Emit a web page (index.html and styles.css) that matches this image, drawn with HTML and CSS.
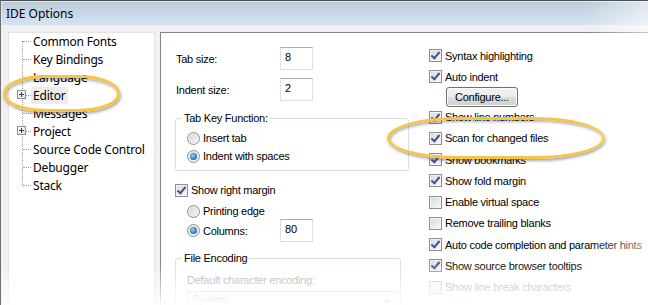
FILE: index.html
```html
<!DOCTYPE html>
<html lang="en">
<head>
    <meta charset="UTF-8">
    <title>IDE Options</title>
    <link rel="stylesheet" href="styles.css">
</head>
<body>
    <div class="window">
        <div class="titlebar">IDE Options</div>
        <div class="client">
            <!-- category tree -->
            <ul class="tree">
                <li class="node"><span class="gutter"></span><span class="label">Common Fonts</span></li>
                <li class="node"><span class="gutter"></span><span class="label">Key Bindings</span></li>
                <li class="node"><span class="gutter"></span><span class="label">Language</span></li>
                <li class="node"><span class="gutter"><span class="expander"></span></span><span class="label selected">Editor</span></li>
                <li class="node"><span class="gutter"></span><span class="label">Messages</span></li>
                <li class="node"><span class="gutter"><span class="expander"></span></span><span class="label">Project</span></li>
                <li class="node"><span class="gutter"></span><span class="label">Source Code Control</span></li>
                <li class="node"><span class="gutter"></span><span class="label">Debugger</span></li>
                <li class="node"><span class="gutter"></span><span class="label">Stack</span></li>
            </ul>

            <div class="pane">
                <div class="col-left">
                    <div class="field-row">
                        <span class="field-label">Tab size:</span>
                        <span class="textbox">8</span>
                    </div>
                    <div class="field-row second">
                        <span class="field-label">Indent size:</span>
                        <span class="textbox">2</span>
                    </div>

                    <fieldset class="group tab-key">
                        <legend>Tab Key Function:</legend>
                        <div class="opt-row first"><span class="radio"></span>Insert tab</div>
                        <div class="opt-row"><span class="radio on"></span>Indent with spaces</div>
                    </fieldset>

                    <div class="opt-row margin-check"><span class="check on"></span>Show right margin</div>
                    <div class="opt-row sub printing"><span class="radio"></span>Printing edge</div>
                    <div class="field-row columns">
                        <span class="field-label sub"><span class="radio on"></span>Columns:</span>
                        <span class="textbox">80</span>
                    </div>

                    <fieldset class="group encoding">
                        <legend>File Encoding</legend>
                        <div class="opt-row first disabled">Default character encoding:</div>
                        <div class="select">System<span class="arrow"></span></div>
                    </fieldset>
                </div>

                <div class="col-right">
                    <div class="opt-row tall"><span class="check on"></span>Syntax highlighting</div>
                    <div class="opt-row tall"><span class="check on"></span>Auto indent</div>
                    <button class="btn">Configure...</button>
                    <div class="opt-row tall"><span class="check on"></span>Show line numbers</div>
                    <div class="opt-row tall"><span class="check on"></span>Scan for changed files</div>
                    <div class="opt-row tall"><span class="check on"></span>Show bookmarks</div>
                    <div class="opt-row tall"><span class="check on"></span>Show fold margin</div>
                    <div class="opt-row tall"><span class="check"></span>Enable virtual space</div>
                    <div class="opt-row tall"><span class="check"></span>Remove trailing blanks</div>
                    <div class="opt-row tall"><span class="check on"></span>Auto code completion and parameter hints</div>
                    <div class="opt-row tall"><span class="check on"></span>Show source browser tooltips</div>
                    <div class="opt-row tall disabled"><span class="check"></span>Show line break characters</div>
                </div>
            </div>
        </div>

        <!-- highlight marks drawn over the dialog -->
        <div class="callout callout-editor"></div>
        <div class="callout callout-scan"></div>
        <div class="fade"></div>
    </div>
</body>
</html>
```

FILE: styles.css
```css
body {
    margin: 0;
    padding: 0;
    background: #fff;
}
.window {
    position: relative;
    width: 647px;
    height: 304px;
    overflow: hidden;
    background: #f0f0f0;
    border-top: 1px solid #4f4f4f;
    border-left: 1px solid #6f6f6f;
    font-family: "Liberation Sans", Arial, sans-serif;
    font-size: 11px;
    letter-spacing: -0.25px;
    color: #000;
}
.titlebar {
    height: 24px;
    line-height: 25px;
    padding-left: 5px;
    font-family: "Noto Sans", sans-serif;
    font-size: 12px;
    letter-spacing: 0;
    background: linear-gradient(to bottom, #b9cad9, #c9d8e7 50%, #d5e3f1);
    box-shadow: inset 1px 1px 0 #e2e9f1;
}
.client {
    display: flex;
    height: 273px;
    padding: 7px 0 0 7px;
}

/* tree */
.tree {
    position: relative;
    list-style: none;
    margin: 0;
    padding: 0;
    width: 145px;
    background: #fff;
    border: 1px solid #e4e4e4;
    border-bottom: none;
    font-family: "Noto Sans", sans-serif;
    font-size: 12px;
    letter-spacing: -0.2px;
}
.tree::before {
    content: "";
    position: absolute;
    left: 13px;
    top: 8px;
    height: 144px;
    border-left: 1px dotted #a0a0a0;
}
.node {
    display: flex;
    align-items: center;
    height: 18px;
}
.tree .node:first-child {
    margin-top: -1px;
}
.gutter {
    position: relative;
    width: 22px;
    height: 18px;
    flex: none;
}
.gutter::after {
    content: "";
    position: absolute;
    left: 14px;
    right: 0;
    top: 9px;
    border-top: 1px dotted #a0a0a0;
}
.expander {
    position: absolute;
    z-index: 1;
    left: 8px;
    top: 4px;
    width: 7px;
    height: 7px;
    border: 1px solid #919191;
    background: linear-gradient(135deg, #fff, #dcdcdc);
}
.expander::before,
.expander::after {
    content: "";
    position: absolute;
    background: #1f3f7a;
}
.expander::before {
    left: 1px;
    top: 3px;
    width: 5px;
    height: 1px;
}
.expander::after {
    left: 3px;
    top: 1px;
    width: 1px;
    height: 5px;
}
.label {
    padding: 0 2px;
    line-height: 17px;
}
.label.selected {
    background: #ececec;
}

/* options pane */
.pane {
    flex: 1;
    display: flex;
    margin: 0 -10px 0 5px;
    background: #fff;
    border: 1px solid #82858d;
    border-bottom: none;
}
.col-left {
    width: 244px;
    padding: 14px 0 0 14px;
    flex: none;
}
.col-right {
    flex: 1;
    padding: 12px 0 0 10px;
}
.field-row {
    display: flex;
    align-items: center;
    height: 23px;
}
.field-row.second {
    margin-top: 8px;
}
.field-label {
    width: 104px;
    padding-left: 1px;
    display: flex;
    align-items: center;
}
.field-label.sub {
    width: 93px;
    padding-left: 12px;
}
.textbox {
    box-sizing: border-box;
    width: 33px;
    height: 23px;
    padding: 3px 0 0 4px;
    border: 1px solid #dbdfe6;
    border-top-color: #abadb3;
    letter-spacing: 0;
}

.group {
    box-sizing: border-box;
    margin: 0;
    padding: 0 0 5px 6px;
    border: 1px solid #d5dfe5;
    border-radius: 3px;
}
.group legend {
    padding: 0 2px;
    line-height: 14px;
}
.tab-key {
    width: 234px;
    margin-top: 10px;
}
.encoding {
    width: 226px;
    margin-top: 9px;
    padding-bottom: 0;
    height: 60px;
}

.opt-row {
    display: flex;
    align-items: center;
    height: 18px;
    white-space: nowrap;
}
.group .opt-row {
    margin-left: 5px;
}
.group .opt-row.first {
    margin-top: 4px;
}
.encoding .opt-row.first {
    margin-top: 6px;
}
.opt-row.tall {
    height: 21.25px;
}
.margin-check {
    margin-top: 10px;
}
.opt-row.sub {
    padding-left: 12px;
}
.printing {
    margin-top: 3px;
}
.columns {
    margin-top: -1px;
}
.disabled {
    color: #a3a3a3;
}

.radio {
    box-sizing: border-box;
    position: relative;
    width: 13px;
    height: 13px;
    margin-right: 3px;
    border: 1px solid #8e8f8f;
    border-radius: 50%;
    background: linear-gradient(135deg, #d2d4d6, #f6f6f6);
    box-shadow: inset 0 0 0 1px #f3f3f3;
    flex: none;
}
.radio.on::after {
    content: "";
    position: absolute;
    left: 2px;
    top: 2px;
    width: 7px;
    height: 7px;
    border-radius: 50%;
    background: radial-gradient(circle at 40% 40%, #8fd3f7, #2b7dbd 60%, #1a5b93);
}
.check {
    box-sizing: border-box;
    position: relative;
    width: 13px;
    height: 13px;
    margin-right: 3px;
    border: 1px solid #8e8f8f;
    background: linear-gradient(135deg, #d6d9de, #f7f7f7);
    box-shadow: inset 0 0 0 1px #f4f4f4;
    flex: none;
}
.check.on::after {
    content: "";
    position: absolute;
    left: 3px;
    top: 0px;
    width: 3px;
    height: 7px;
    border: solid #3e5590;
    border-width: 0 2px 2px 0;
    transform: rotate(40deg);
}
.disabled .check {
    border-color: #c9c9c9;
    background: #f4f4f4;
}

.btn {
    display: block;
    box-sizing: border-box;
    width: 72px;
    height: 20px;
    margin: -1px 0 0 17px;
    padding: 0;
    border: 1px solid #707070;
    border-radius: 3px;
    background: linear-gradient(to bottom, #f2f2f2, #ebebeb 50%, #dddddd 50%, #cfcfcf);
    box-shadow: inset 0 0 0 1px #fbfbfb;
    font: inherit;
    letter-spacing: -0.25px;
    color: #000;
}

.select {
    position: relative;
    box-sizing: border-box;
    width: 211px;
    height: 21px;
    margin: 2px 0 0 5px;
    padding: 1px 0 0 4px;
    border: 1px solid #d9d9d9;
    border-radius: 2px;
    color: #b8b8b8;
}
.arrow {
    position: absolute;
    right: 6px;
    top: 8px;
    border: 4px solid transparent;
    border-top-color: #b8b8b8;
}

/* annotation marks */
.callout {
    position: absolute;
    box-sizing: border-box;
    border: 3px solid #f6c545;
    box-shadow: 1px 2px 3px rgba(0, 0, 0, 0.35), inset 1px 2px 3px rgba(0, 0, 0, 0.3);
}
.callout-editor {
    left: 2px;
    top: 74px;
    width: 117px;
    height: 37px;
    border-radius: 42px / 18px;
}
.callout-scan {
    left: 386px;
    top: 116px;
    width: 218px;
    height: 42px;
    border-radius: 70px / 21px;
}
.fade {
    position: absolute;
    left: -1px;
    top: -1px;
    width: 648px;
    height: 305px;
    pointer-events: none;
    background:
        linear-gradient(to bottom, rgba(255, 255, 255, 0) 262px, rgba(255, 255, 255, 0.92) 305px),
        linear-gradient(to right, rgba(255, 255, 255, 0) 585px, rgba(255, 255, 255, 0.55) 648px);
}
```
